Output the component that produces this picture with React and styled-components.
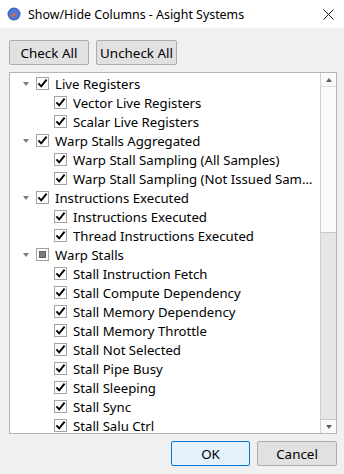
import React from 'react'
import styled, {createGlobalStyle} from 'styled-components'

const GlobalStyle = createGlobalStyle`
  html, body {
    margin: 0;
    padding: 0;
    background: #f0f0f0;
  }
  * {
    box-sizing: border-box;
  }
`

const font = `'Noto Sans', 'Open Sans', sans-serif`

const Window = styled.div`
  width: 344px;
  height: 474px;
  background: #f0f0f0;
  font-family: ${font};
  color: #000;
  display: flex;
  flex-direction: column;
  overflow: hidden;
`

const TitleBar = styled.div`
  height: 28px;
  background: #fff;
  display: flex;
  align-items: center;
  padding: 0 10px 0 7px;
  gap: 7px;
  font-size: 12.4px;
`

const TitleText = styled.div`
  flex: 1;
  white-space: nowrap;
`

const Body = styled.div`
  flex: 1;
  display: flex;
  flex-direction: column;
  padding: 12px 7px 7px 9px;
`

const Toolbar = styled.div`
  display: flex;
  gap: 7px;
  margin-bottom: 7px;
`

const Button = styled.button`
  height: 25px;
  width: ${p => p.w}px;
  padding: 0;
  font-family: ${font};
  font-size: 13.4px;
  color: #000;
  border: 1px solid ${p => (p.primary ? '#0078d7' : '#adadad')};
  border-radius: 2px;
  background: ${p => (p.primary ? '#e5f1fb' : '#e1e1e1')};
`

const ListBox = styled.div`
  height: 362px;
  border: 1px solid #b5b5b5;
  background: #fff;
  display: flex;
`

const Rows = styled.div`
  flex: 1;
  min-width: 0;
  padding-top: 1px;
  overflow: hidden;
`

const Row = styled.div`
  height: 19px;
  display: flex;
  align-items: center;
  padding-left: ${p => (p.depth ? 44 : 6)}px;
  font-size: 13.2px;
  white-space: nowrap;
`

const Arrow = styled.span`
  width: 20px;
  height: 19px;
  display: flex;
  align-items: center;
  justify-content: center;
  &::before {
    content: '';
    border-left: 3.5px solid transparent;
    border-right: 3.5px solid transparent;
    border-top: 4px solid #7a7a7a;
  }
`

const Box = styled.span`
  width: 13px;
  height: 13px;
  border: 1px solid #a3a3a3;
  background: #fff;
  display: flex;
  align-items: center;
  justify-content: center;
  flex-shrink: 0;
  margin-right: 6px;
`

const Partial = styled.span`
  width: 7px;
  height: 7px;
  background: #7d7d7d;
  border: 1px solid #5f5f5f;
`

const Label = styled.span`
  overflow: hidden;
  text-overflow: ellipsis;
  padding-right: 6px;
`

const ScrollBar = styled.div`
  width: 16px;
  border-left: 1px solid #d0d0d0;
  display: flex;
  flex-direction: column;
`

const ScrollButton = styled.div`
  height: 14px;
  display: flex;
  align-items: center;
  justify-content: center;
  background: #fafafa;
  border-bottom: ${p => (p.down ? 'none' : '1px solid #dcdcdc')};
  border-top: ${p => (p.down ? '1px solid #c8c8c8' : 'none')};
  &::before {
    content: '';
    border-left: 3.5px solid transparent;
    border-right: 3.5px solid transparent;
    ${p => (p.down ? 'border-top: 4px solid #606060;' : 'border-bottom: 4px solid #606060;')}
  }
`

const Thumb = styled.div`
  height: 146px;
  background: #fbfbfb;
  border-bottom: 1px solid #c8c8c8;
`

const Track = styled.div`
  flex: 1;
  background: #e6e6e6;
`

const Footer = styled.div`
  display: flex;
  justify-content: flex-end;
  gap: 7px;
  margin-top: 7px;
`

const Check = () => (
  <svg width="11" height="11" viewBox="0 0 11 11">
    <path d="M1.4 5.4 L4.2 8.4 L9.6 1.6" fill="none" stroke="#000" strokeWidth="1.9" />
  </svg>
)

const AppIcon = () => (
  <svg width="14" height="14" viewBox="0 0 14 14">
    <circle cx="7" cy="7" r="6.5" fill="#3e64c0" />
    <circle cx="7" cy="7" r="5.2" fill="#5077d6" />
    <path d="M4.5 9.5 L10 4 L7 9.2 Z" fill="#f06a1e" />
    <circle cx="6" cy="8.3" r="1.6" fill="#f06a1e" />
  </svg>
)

const CloseIcon = () => (
  <svg width="11" height="11" viewBox="0 0 11 11">
    <path d="M0.5 0.5 L10.5 10.5 M10.5 0.5 L0.5 10.5" stroke="#111" strokeWidth="1" />
  </svg>
)

const tree = [
  {label: 'Live Registers', state: 'on', children: ['Vector Live Registers', 'Scalar Live Registers']},
  {
    label: 'Warp Stalls Aggregated',
    state: 'on',
    children: ['Warp Stall Sampling (All Samples)', 'Warp Stall Sampling (Not Issued Samples)'],
  },
  {label: 'Instructions Executed', state: 'on', children: ['Instructions Executed', 'Thread Instructions Executed']},
  {
    label: 'Warp Stalls',
    state: 'partial',
    children: [
      'Stall Instruction Fetch',
      'Stall Compute Dependency',
      'Stall Memory Dependency',
      'Stall Memory Throttle',
      'Stall Not Selected',
      'Stall Pipe Busy',
      'Stall Sleeping',
      'Stall Sync',
      'Stall Salu Ctrl',
    ],
  },
]

const Item = ({depth, label, state}) => (
  <Row depth={depth}>
    {!depth && <Arrow />}
    <Box>{state === 'partial' ? <Partial /> : <Check />}</Box>
    <Label>{label}</Label>
  </Row>
)

export default function App() {
  return (
    <Window>
      <GlobalStyle />
      <TitleBar>
        <AppIcon />
        <TitleText>Show/Hide Columns - Asight Systems</TitleText>
        <CloseIcon />
      </TitleBar>
      <Body>
        <Toolbar>
          <Button w={80}>Check All</Button>
          <Button w={81}>Uncheck All</Button>
        </Toolbar>
        <ListBox>
          <Rows>
            {tree.map(group => (
              <React.Fragment key={group.label}>
                <Item depth={0} label={group.label} state={group.state} />
                {group.children.map(c => (
                  <Item key={c} depth={1} label={c} state="on" />
                ))}
              </React.Fragment>
            ))}
          </Rows>
          <ScrollBar>
            <ScrollButton />
            <Thumb />
            <Track />
            <ScrollButton down />
          </ScrollBar>
        </ListBox>
        <Footer>
          <Button w={79} primary>OK</Button>
          <Button w={80}>Cancel</Button>
        </Footer>
      </Body>
    </Window>
  )
}
